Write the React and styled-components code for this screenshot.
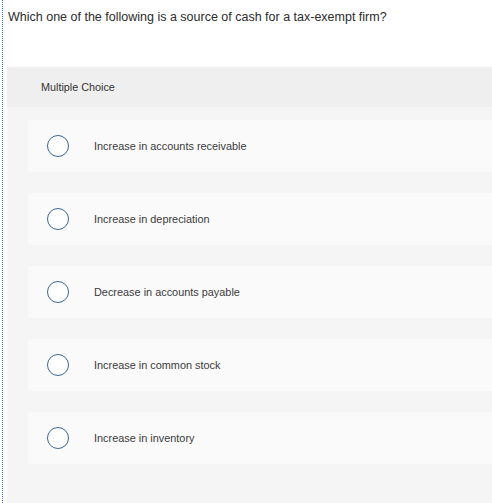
import styled, { createGlobalStyle } from "styled-components";

const GlobalStyle = createGlobalStyle`
    html, body {
        margin: 0;
        padding: 0;
        background: #fff;
        overflow: hidden;
    }
    body {
        font-family: "Liberation Sans", Arial, sans-serif;
    }
`;

const options = [
    "Increase in accounts receivable",
    "Increase in depreciation",
    "Decrease in accounts payable",
    "Increase in common stock",
    "Increase in inventory",
];

function App() {
    return (
        <>
            <GlobalStyle />
            <Page>
                <Question>Which one of the following is a source of cash for a tax-exempt firm?</Question>
                <Panel>
                    <PanelHeader>Multiple Choice</PanelHeader>
                    <OptionList>
                        {options.map((text) => (
                            <Option key={text}>
                                <Radio />
                                <Label>{text}</Label>
                            </Option>
                        ))}
                    </OptionList>
                </Panel>
            </Page>
        </>
    );
}

const Page = styled.div`
    height: 503px;
    width: 492px;
    box-sizing: border-box;
    margin-left: 2px;
    border-left: 1px dotted #2f6fc4;
    padding-left: 4px;
    display: flex;
    flex-direction: column;
    overflow: hidden;
`;

const Question = styled.p`
    margin: 0;
    padding: 10px 0 0 1px;
    height: 67px;
    box-sizing: border-box;
    font-size: 12.5px;
    color: #2b2b2b;
    white-space: nowrap;
`;

const Panel = styled.div`
    flex: 1;
    width: 500px;
    background: #f5f5f5;
    display: flex;
    flex-direction: column;
`;

const PanelHeader = styled.div`
    height: 40px;
    display: flex;
    align-items: center;
    padding-left: 34px;
    background: #efefef;
    font-size: 10.8px;
    color: #333;
`;

const OptionList = styled.ul`
    list-style: none;
    margin: 0;
    padding: 13px 0 0 21px;
    display: flex;
    flex-direction: column;
    gap: 21px;
`;

const Option = styled.li`
    height: 52px;
    background: #fafafa;
    border-radius: 3px 0 0 3px;
    display: flex;
    align-items: center;
    padding-left: 19px;
`;

const Radio = styled.span`
    width: 20px;
    height: 20px;
    border: 1.5px solid #3a679a;
    border-radius: 50%;
    background: #fff;
    flex-shrink: 0;
`;

const Label = styled.span`
    margin-left: 25px;
    font-size: 10.9px;
    color: #3a3a3a;
`;

export default App;
